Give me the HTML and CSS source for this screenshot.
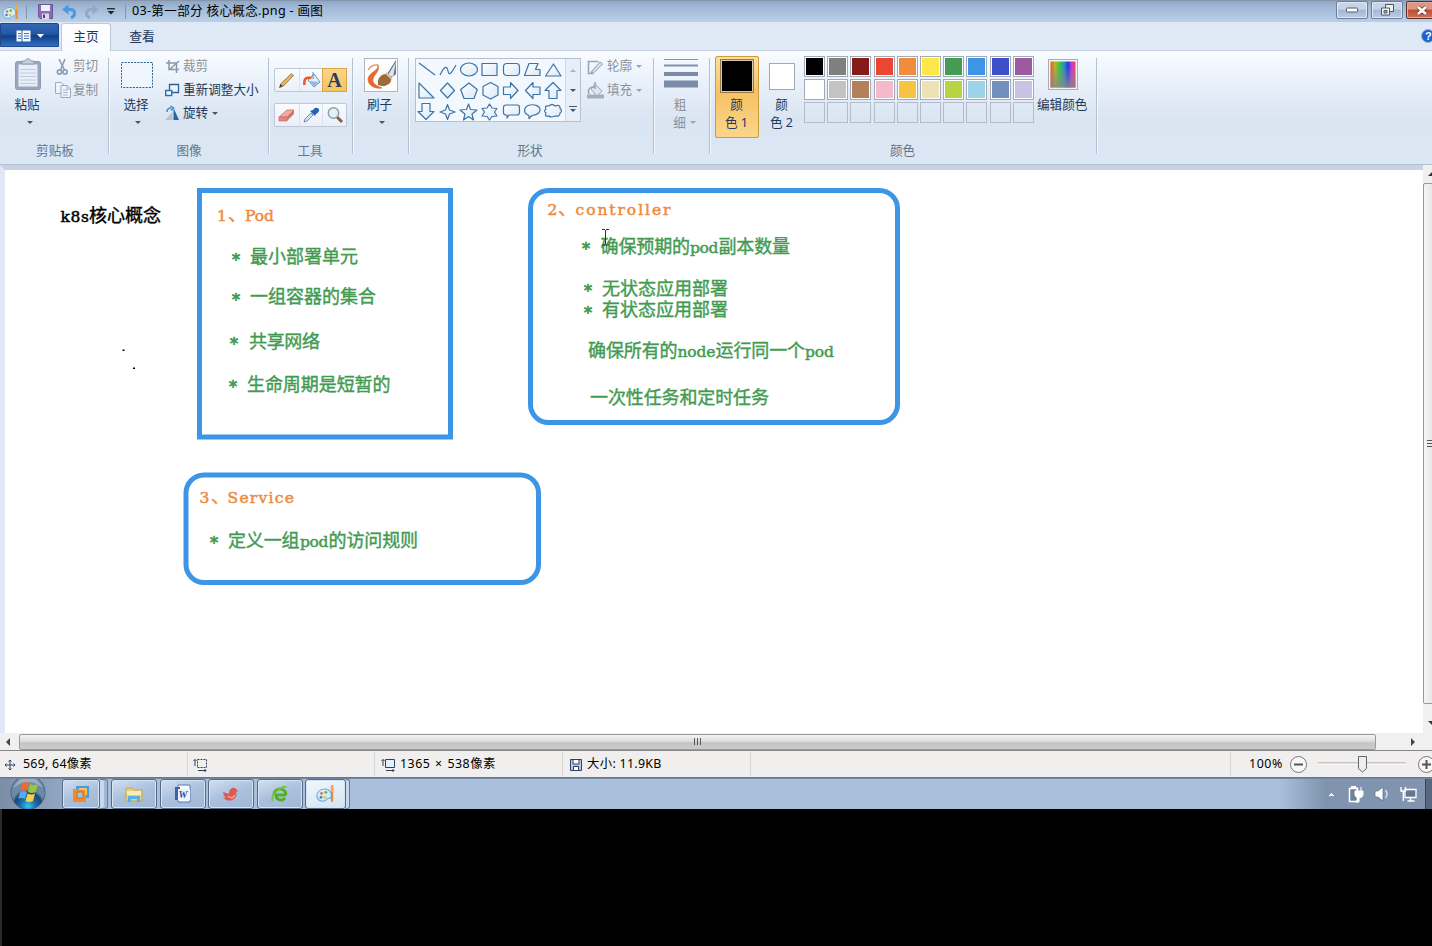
FILE: index.html
```html
<!DOCTYPE html>
<html lang="zh-CN">
<head>
<meta charset="utf-8">
<title>03-第一部分 核心概念.png - 画图</title>
<link rel="stylesheet" href="styles.css">
</head>
<body>
<svg class="defs" width="0" height="0">
  <defs>
    <linearGradient id="shade" x1="0" y1="0" x2="1" y2="1"><stop offset="0" stop-color="#fff"/><stop offset="1" stop-color="#d9e9f8"/></linearGradient>
    <linearGradient id="rainbow"><stop offset="0" stop-color="#e8552a"/><stop offset=".18" stop-color="#b5b52c"/><stop offset=".36" stop-color="#3bc63b"/><stop offset=".55" stop-color="#2a8ec8"/><stop offset=".7" stop-color="#2c36dd"/><stop offset=".85" stop-color="#c738e2"/><stop offset="1" stop-color="#f04458"/></linearGradient>
    <linearGradient id="fade" x2="0" y2="1"><stop offset=".2" stop-color="#888" stop-opacity="0"/><stop offset="1" stop-color="#888" stop-opacity=".85"/></linearGradient>
    <radialGradient id="orb" cy=".9"><stop offset="0" stop-color="#35c5f5"/><stop offset=".45" stop-color="#176fae"/><stop offset=".8" stop-color="#1d4672"/><stop offset="1" stop-color="#6d8ba8"/></radialGradient>
    <symbol id="paint" viewBox="0 0 18 18"><path d="M8 4.500C3 4.500 0 8 1 12c1 4 6 4 8 2.500 1-2 2-1 4-2 2-3 0-8-5-8z" fill="#d6eafa" stroke="#6aaad6"/><circle cx="5" cy="8.500" r="1.300" fill="#ef762d"/><circle cx="8.800" cy="7.500" r="1.300" fill="#57b854"/><circle cx="4.500" cy="12" r="1.300" fill="#2f87cf"/><circle cx="8" cy="12" r="1.300" fill="#e8c53a"/><path d="M14.500 1v6" stroke="#f2a64a" stroke-width="2.400"/><path d="M14.500 7v9" stroke="#e58b35" stroke-width="2"/></symbol>
  </defs>
</svg>
<div class="window">
  <header class="titlebar">
    <svg class="t-app" width="18" height="18"><use href="#paint"/></svg>
    <i class="t-sep"></i>
    <svg class="t-save" width="15" height="15" viewBox="0 0 15 15"><path d="M.5.5h14v14H2l-1.500-1.500z" fill="#8b6bb4" stroke="#6d5597"/><path d="M3 1h9v6H3z" fill="#e9f4fa"/><path d="M4 9.500h7V15H4z" fill="#dcd8ea"/><path d="M5 10.500h2V14H5z" fill="#54407c"/></svg>
    <svg class="t-undo" width="15" height="16" viewBox="0 0 15 16"><path d="M4 5.500h4c6 0 6 6 1 8.500" fill="none" stroke="#4a98de" stroke-width="3"/><path d="M0 5.500 6.500.500v10z" fill="#4a98de"/></svg>
    <svg class="t-redo" width="15" height="16" viewBox="0 0 15 16"><path d="M11 5.500H7c-6 0-6 6-1 8.500" fill="none" stroke="#94a9c3" stroke-width="3"/><path d="M15 5.500 8.500.500v10z" fill="#94a9c3"/></svg>
    <svg class="t-more" width="8" height="7" viewBox="0 0 8 7"><path d="M0 .700h8" stroke="#222" stroke-width="1.300"/><path d="M.500 3h7L4 6.500z" fill="#222"/></svg>
    <i class="t-sep t-sep2"></i>
    <h1 class="title">03-第一部分 核心概念.png - 画图</h1>
    <div class="winbtns">
      <span class="wb"><svg width="12" height="6" viewBox="0 0 12 6"><rect x=".5" y="1" width="11" height="4" rx="1" fill="#fff" stroke="#555c68"/></svg></span>
      <span class="wb"><svg width="13" height="12" viewBox="0 0 13 12"><path d="M4.500.500h8v7h-8z" fill="#eee" stroke="#4f5765"/><path d="M.500 4h8v7h-8z" fill="#f5f5f5" stroke="#4f5765"/><path d="M3 6.500h3v2.500H3z" fill="#9db2cc" stroke="#4f5765"/></svg></span>
      <span class="wb wb-close"><svg width="12" height="11" viewBox="0 0 12 11"><path d="m2 2 8 7m0-7L2 9" stroke="#653c3c" stroke-width="4.200"/><path d="m2 2 8 7m0-7L2 9" stroke="#fff" stroke-width="2.600"/></svg></span>
    </div>
  </header>

  <nav class="tabs">
    <span class="filebtn"><svg width="30" height="12" viewBox="0 0 30 12"><rect x=".5" y=".5" width="14" height="11" fill="#f6faff"/><path d="M6 0v12" stroke="#2a5cab"/><path d="M2 3.500h3m-3 2.500h3M2 8.500h3M8 3.500h5M8 6h5M8 8.500h5" stroke="#5072a8"/><path d="M21 4h7l-3.500 4z" fill="#fff"/></svg></span>
    <span class="tab tab-on">主页</span>
    <span class="tab">查看</span>
    <svg class="help" width="14" height="14" viewBox="0 0 14 14"><circle cx="7" cy="7" r="6.400" fill="#1f5fd0" stroke="#86a8da"/><text x="4" y="11" class="help-q">?</text></svg>
  </nav>

  <section class="ribbon">
    <div class="group g-clip">
      <div class="body">
        <div class="big">
          <svg class="big-ic" width="28" height="34" viewBox="0 0 28 34"><rect x="1.500" y="3.500" width="25" height="28" rx="2" fill="#98a6be" stroke="#8d9bb4"/><path d="M4.500 6.500h19v22h-19z" fill="#e8eef7"/><path d="M6 11.500h16M6 15h16M6 18.500h16M6 22h16M6 25.500h16" stroke="#c0cce0"/><path d="M8 6V3h3c1-3 5-3 6 0h3v3z" fill="#c6d0df" stroke="#8d9cb5"/></svg>
          <b>粘贴</b><i class="arr"></i>
        </div>
        <div class="list">
          <span class="off"><svg width="18" height="18" viewBox="0 0 18 18"><path d="M4 1l5.500 11M10 1 5.500 12" stroke="#8d9db5" stroke-width="1.600"/><g fill="none" stroke="#8d9db5" stroke-width="1.700"><circle cx="4.500" cy="14" r="2.100"/><circle cx="10" cy="14" r="2.100"/></g></svg>剪切</span>
          <span class="off"><svg width="18" height="18" viewBox="0 0 18 18"><path d="M.500 1.500h6l3 3v8h-9z" fill="#eef3fa" stroke="#a0adc0"/><path d="M6 4.500h6l3.500 3.500v8.500H6z" fill="#f0f4fa" stroke="#98a7bc"/><path d="M8 9h5m-5 2.500h5m-5 2.500h5M12 4.500V8h3.500" fill="none" stroke="#a9b6c9"/></svg>复制</span>
        </div>
      </div>
      <p class="name">剪贴板</p>
    </div>

    <div class="group g-image">
      <div class="body">
        <div class="big">
          <svg class="big-ic" width="34" height="34" viewBox="0 0 34 34"><rect x="1.500" y="4.500" width="31" height="25" fill="#f0f6fd" stroke="#2c6091" stroke-dasharray="2 1.200"/></svg>
          <b>选择</b><i class="arr"></i>
        </div>
        <div class="list">
          <span class="off"><svg width="18" height="18" viewBox="0 0 18 18"><path d="M1 5h10.500v10M4 2v9.500h10M4.500 11.500 14 3" fill="none" stroke="#8998ae" stroke-width="1.500"/></svg>裁剪</span>
          <span><svg width="18" height="18" viewBox="0 0 18 18"><path d="M4.500 3.500h9v8h-9z" fill="#eef6ff" stroke="#2d6093" stroke-width="1.300"/><path d="M.700 9.500h6v5h-6z" fill="#f4f9ff" stroke="#2a72b4" stroke-width="1.400"/></svg>重新调整大小</span>
          <span><svg width="18" height="18" viewBox="0 0 18 18"><path d="M7.500 7v8H0z" fill="#b8c3cf"/><path d="M8.500 3 14 15H8.500z" fill="#2068a9"/><path d="M2 7q0-4 4-4M5.500 1l3 2-2.500 2.500" fill="none" stroke="#408ed5" stroke-width="1.600"/></svg>旋转<i class="arr"></i></span>
        </div>
      </div>
      <p class="name">图像</p>
    </div>

    <div class="group g-tools">
      <div class="body tools">
        <div class="strip">
          <span><svg width="18" height="18" viewBox="0 0 18 18"><path d="m1.500 16.500 1.500-4L13 3l2 2L5.500 15z" fill="#e8b64e" stroke="#866b3e" stroke-width=".8"/><path d="m1.500 16.500 1-3.500 2 2z" fill="#333"/><path d="m12.500 3 1-1 2.700 2.500-1 1z" fill="#e28b87"/></svg></span>
          <span><svg width="20" height="18" viewBox="0 0 20 18"><path d="m6 9 6-6 6 8-6 5z" fill="#e2eef7" stroke="#688eb4"/><path d="m7 10 10 1-5 4z" fill="#8ebbdc"/><path d="M2.500 14c-1-7 2-8 7-7" fill="none" stroke="#e35a2f" stroke-width="2.500"/><path d="M11 1v7" stroke="#748899"/></svg></span>
          <span class="on"><em>A</em></span>
        </div>
        <div class="strip">
          <span><svg width="19" height="18" viewBox="0 0 19 18"><path d="m2 11 8-7h7l-7 7z" fill="#f3aaa0" stroke="#ca7269" stroke-width=".8"/><path d="M2 11h8v4H2z" fill="#e98379" stroke="#ca7269" stroke-width=".8"/><path d="m10 11 7-7v4l-7 7z" fill="#d2776d"/></svg></span>
          <span><svg width="18" height="18" viewBox="0 0 18 18"><path d="m2 16 1-3 6-6 2 2-6 6z" fill="#cbe5f7" stroke="#7291ab"/><path d="m8 5 5 5 1-2c4-2 4-6 1-6-2-1-3 1-4 2z" fill="#2264b2"/></svg></span>
          <span><svg width="18" height="18" viewBox="0 0 18 18"><path d="m11 11 5 5" stroke="#8b5e48" stroke-width="3"/><circle cx="7.500" cy="7" r="5.200" fill="#e1f1fb" stroke="#909eaa" stroke-width="1.500"/></svg></span>
        </div>
      </div>
      <p class="name">工具</p>
    </div>

    <div class="group g-brush">
      <div class="body">
        <div class="big">
          <svg class="big-ic" width="34" height="34" viewBox="0 0 34 34"><rect x=".5" y=".5" width="33" height="33" fill="#fdfdfd" stroke="#aeb6c1"/><path d="M14 7Q8 6 4 12" fill="none" stroke="#e78b62" stroke-width="1.300"/><path d="M14 7c1 6-9 7-10 14 0 6 6 10 14 9-6-2-10-5-9-9 1-5 7-7 5-14z" fill="#e3692e" stroke="#e3692e" stroke-width=".8"/><path d="m23 16 9-14v14l-6 5z" fill="#657689"/><path d="m24 17 8-13-3 15z" fill="#dce4eb"/><path d="M14 27c-1-7 3-11 8-11l5 5c1 5-7 9-13 6z" fill="#9c6b38"/><path d="m22 15 6 6" stroke="#d4c2a2" stroke-width="2"/></svg>
          <b>刷子</b><i class="arr"></i>
        </div>
      </div>
    </div>

    <div class="group g-shapes">
      <div class="body">
        <div class="shapebox">
          <svg class="shapes" width="149" height="63" viewBox="416 58 149 63">
            <g fill="url(#shade)" stroke="#3d74a8" stroke-width="1.200" stroke-linejoin="round">
              <path d="m419 62 16 12"/><path d="M440 74c5-10 7-9 8-4s3 3 8-6" fill="none"/><ellipse cx="469" cy="68.500" rx="8.500" ry="6.500"/><path d="M482 62.500h15v12h-15z"/><rect x="503.500" y="62.500" width="16" height="12" rx="3.500"/><path d="M524.500 74.500 529 62.500h9l-2.500 6h4.500v6z"/><path d="m553.500 63 7.500 12h-15.500z"/>
              <path d="m419 82 15 15h-15z"/><path d="m447.500 82 7 7.500-7 7.500-7-7.500z"/><path d="m469 82 8.300 6.500-3.300 9h-10l-3.300-9z"/><path d="m490.500 81.500 7.500 4v8.500l-7.500 4-7.500-4v-8.500z"/><path d="M503.500 86h7v-4.500l7.500 8-7.500 8V93.500h-7z"/><path d="M540 86h-7v-4.500l-7.500 8 7.500 8V93.500h7z"/><path d="M549 97.500v-8h-4l8-8 8 8h-4v8z"/>
              <path d="M422 102.500v8h-4l8 8 8-8h-4v-8z"/><path d="m447.500 103.500 2 5.500 5.500 2-5.500 2-2 5.500-2-5.500-5.500-2 5.500-2z"/><path d="m468.500 103 2 5.500 6.500.500-5 4 1.500 6-5-3.500-5 3.500 1.500-6-5-4 6.500-.500z"/><path d="m489.500 103 2.500 4 5 .5-2.500 3.500 2.500 4-5 .5-2.500 3.500-2.500-3.500-5-.5 2.500-4-2.500-3.500 5-.5z"/><path d="M506 104h11q2.500 0 2.500 2.500v5q0 2.500-2.500 2.500h-8l-2 3v-3h-1q-2.500 0-2.500-2.500v-5q0-2.500 2.500-2.500z"/><path d="M529 114.500c-6-2-6-9 1-10.500 11-2 15 9 2 10.500l-3 3z"/><path d="M549 105q3-3 6 0 5-2 5 2 3 3 0 5 0 4-5 3-4 2-6 0-5 1-3-3-3-2 0-4-2-4 3-3z"/>
            </g>
          </svg>
          <div class="shapescroll"><i class="arr up"></i><i class="arr"></i><i class="arr bar"></i></div>
        </div>
        <div class="list">
          <span class="off"><svg width="18" height="18" viewBox="0 0 18 18"><path d="M.500 3.500h11M1.500 3v12.500h5" fill="none" stroke="#9aa7b9" stroke-width="1.600"/><path d="m5 13 8-9 2.500 2L7 14.500l-3 1z" fill="#dce5ef" stroke="#8797ae"/></svg>轮廓<i class="arr"></i></span>
          <span class="off"><svg width="18" height="18" viewBox="0 0 18 18"><path d="M0 13.500h17v4H0z" fill="#a3aebf"/><path d="m4 8 4-5 7 7-5 5z" fill="#dce5ef" stroke="#98a7bc"/><path d="M2 13c-2-6 2-7 6-7M8 1v7" fill="none" stroke="#98a7bc" stroke-width="1.500"/></svg>填充<i class="arr"></i></span>
        </div>
      </div>
      <p class="name">形状</p>
    </div>

    <div class="group g-size">
      <div class="body">
        <div class="big off">
          <svg class="big-ic" width="34" height="34" viewBox="0 0 34 34"><path d="M0 1.500h34" stroke="#8391ab"/><path d="M0 7.500h34" stroke="#8391ab" stroke-width="2"/><path d="M0 16h34" stroke="#7b8ba9" stroke-width="4"/><path d="M0 26h34" stroke="#7b8ba9" stroke-width="7"/></svg>
          <b>粗</b><b>细<i class="arr"></i></b>
        </div>
      </div>
    </div>

    <div class="group g-colors">
      <div class="body">
        <div class="colorbtn sel"><i class="well c-black"></i><b>颜</b><b>色 1</b></div>
        <div class="colorbtn"><i class="well small"></i><b>颜</b><b>色 2</b></div>
        <div class="palette">
          <i class="c-black"></i><i class="c-gray"></i><i class="c-maroon"></i><i class="c-red"></i><i class="c-orange"></i><i class="c-yellow"></i><i class="c-green"></i><i class="c-blue"></i><i class="c-indigo"></i><i class="c-purple"></i>
          <i class="c-white"></i><i class="c-silver"></i><i class="c-brown"></i><i class="c-pink"></i><i class="c-gold"></i><i class="c-cream"></i><i class="c-lime"></i><i class="c-sky"></i><i class="c-steel"></i><i class="c-lilac"></i>
          <i class="none"></i><i class="none"></i><i class="none"></i><i class="none"></i><i class="none"></i><i class="none"></i><i class="none"></i><i class="none"></i><i class="none"></i><i class="none"></i>
        </div>
        <div class="big edit">
          <svg class="big-ic" width="32" height="34" viewBox="0 0 32 34"><rect x="1.500" y="1.500" width="29" height="30" fill="#f7f3ee" stroke="#a9adb5"/><path d="M3.500 3.500h25v26h-25z" fill="url(#rainbow)"/><path d="M3.500 3.500h25v26h-25z" fill="url(#fade)"/></svg>
          <b>编辑颜色</b>
        </div>
      </div>
      <p class="name">颜色</p>
    </div>
  </section>

  <main class="work">
    <svg class="sheet" width="1418" height="563" viewBox="5 170 1418 563">
      <g class="frame">
        <rect x="199.500" y="190.500" width="251" height="246.500"/>
        <rect x="530.500" y="190.500" width="367" height="232" rx="18"/>
        <rect x="186" y="475" width="352.500" height="107.500" rx="18"/>
      </g>
      <text class="ink" y="221.500"><tspan class="lat" x="60.500" textLength="28.500">k8s</tspan><tspan x="89" textLength="72">核心概念</tspan></text>
      <g class="orange">
        <text y="221"><tspan class="lat" x="217">1</tspan><tspan x="228">、</tspan><tspan class="lat" x="245" textLength="29">Pod</tspan></text>
        <text y="215"><tspan class="lat" x="547.500">2</tspan><tspan x="558">、</tspan><tspan class="lat" x="575.500" textLength="95">controller</tspan></text>
        <text y="503"><tspan class="lat" x="199.500">3</tspan><tspan x="211">、</tspan><tspan class="lat" x="227.500" textLength="66.500">Service</tspan></text>
      </g>
      <g class="green">
        <text y="263"><tspan class="star" x="232" dy="2.500">*</tspan><tspan x="250" dy="-2.500" textLength="108">最小部署单元</tspan></text>
        <text y="303"><tspan class="star" x="232" dy="2.500">*</tspan><tspan x="250" dy="-2.500" textLength="126">一组容器的集合</tspan></text>
        <text y="347.500"><tspan class="star" x="230" dy="2.500">*</tspan><tspan x="249" dy="-2.500" textLength="71">共享网络</tspan></text>
        <text y="390.500"><tspan class="star" x="229" dy="2.500">*</tspan><tspan x="247" dy="-2.500" textLength="143.500">生命周期是短暂的</tspan></text>
        <text y="252.500"><tspan class="star" x="582" dy="2.500">*</tspan><tspan x="600.500" dy="-2.500" textLength="89.500">确保预期的</tspan><tspan class="lat" x="690" textLength="28.500">pod</tspan><tspan x="718.500" textLength="71.500">副本数量</tspan></text>
        <text y="294.500"><tspan class="star" x="584" dy="2.500">*</tspan><tspan x="602" dy="-2.500" textLength="126">无状态应用部署</tspan></text>
        <text y="316"><tspan class="star" x="584" dy="2.500">*</tspan><tspan x="602" dy="-2.500" textLength="126">有状态应用部署</tspan></text>
        <text y="357"><tspan x="588" textLength="89.500">确保所有的</tspan><tspan class="lat" x="677.500" textLength="38">node</tspan><tspan x="715.500" textLength="89.500">运行同一个</tspan><tspan class="lat" x="805" textLength="29">pod</tspan></text>
        <text y="403.500"><tspan x="590" textLength="179">一次性任务和定时任务</tspan></text>
        <text y="546.500"><tspan class="star" x="210" dy="2.500">*</tspan><tspan x="228" dy="-2.500" textLength="71.500">定义一组</tspan><tspan class="lat" x="300" textLength="28.500">pod</tspan><tspan x="328.500" textLength="89.500">的访问规则</tspan></text>
      </g>
      <path d="M122.500 349.500h2v1.500h-2zM133 367.500h2v1.500h-2z"/>
      <path d="M602 229.500h3m1 0h3M605.500 230v14.500M602 245h3m1 0h3" fill="none" stroke="#333"/>
    </svg>
    <div class="vscroll"><i class="arr up"></i><div class="vthumb"><i></i><i></i><i></i></div><i class="arr"></i></div>
  </main>

  <div class="hscroll"><i class="arr left"></i><div class="hthumb"><i></i><i></i><i></i></div><i class="arr right"></i></div>

  <footer class="status">
    <div class="cell s1"><svg width="12" height="12" viewBox="0 0 12 12"><path d="M6 1v10M1 6h10M4.500 2.500 6 1l1.500 1.500m-3 7L6 11l1.500-1.500m-5-5L1 6l1.500 1.500m7-3L11 6 9.500 7.500" fill="none" stroke="#2c4262"/></svg>569, 64像素</div>
    <div class="cell s2"><svg width="14" height="14" viewBox="0 0 14 14"><path d="M2 8V1.500M.500 3 2 1.500 3.500 3M5 12.500h8M11.500 11l1.500 1.500-1.500 1.500" fill="none" stroke="#2c4262"/><path d="M4.500 1.500h9v8h-9z" fill="none" stroke="#2c4262" stroke-dasharray="2 1"/></svg></div>
    <div class="cell s3"><svg width="14" height="14" viewBox="0 0 14 14"><path d="M2 8V1.500M.500 3 2 1.500 3.500 3M5 12.500h8M11.500 11l1.500 1.500-1.500 1.500" fill="none" stroke="#2c4262"/><path d="M4.500 1.500h9v8h-9z" fill="#e4f0fa" stroke="#2c4262"/></svg>1365 × 538像素</div>
    <div class="cell s4"><svg width="12" height="12" viewBox="0 0 12 12"><path d="M.500.500h11v11H.500z" fill="#b8cce0" stroke="#2c4262"/><path d="M3 .500h6v4.500H3zM3.500 7.500h5v4h-5z" fill="#fff" stroke="#2c4262"/></svg>大小: 11.9KB</div>
    <div class="cell s5"></div>
    <div class="zoom">
      <span>100%</span>
      <svg width="19" height="19" viewBox="0 0 19 19"><circle cx="9.500" cy="9.500" r="8" fill="#f7f7f7" stroke="#777"/><path d="M5 9.500h9" stroke="#555" stroke-width="2"/></svg>
      <svg class="slider" width="90" height="18" viewBox="0 0 90 18"><path d="M1 8h88" stroke="#999"/><path d="M1 9h88" stroke="#fff"/><path d="M41.500 1.500h8v12l-4 3.500-4-3.500z" fill="#eee" stroke="#666"/></svg>
      <svg width="19" height="19" viewBox="0 0 19 19"><circle cx="9.500" cy="9.500" r="8" fill="#f7f7f7" stroke="#777"/><path d="M5 9.500h9M9.500 5v9" stroke="#555" stroke-width="2"/></svg>
    </div>
  </footer>

  <div class="taskbar">
    <svg class="orb" width="38" height="30" viewBox="0 0 38 30"><circle cx="19" cy="13.500" r="17" fill="url(#orb)" stroke="#466685"/><path d="M4 9q15-12 30 0Q28-2 19-2T4 9z" fill="#fff" opacity=".3"/><path d="M13.500 4q4-2 6.500 0l-2 8q-3-2-6.500 0z" fill="#ed6b2c"/><path d="M21 5q4 2 8 0l-2.500 8q-4 2-7.500 0z" fill="#9bc43d"/><path d="M11.500 13q3-2 6.500 0l-2 7q-4-2-7 0z" fill="#55aaf0"/><path d="M18.500 14.500q4 2 7.500 0l-2 7.500q-4 2-7.500 0z" fill="#f8cf45"/></svg>
    <span class="task t1"><svg width="20" height="20" viewBox="0 0 20 20"><path d="M5 2h13v12H5z" fill="#4c9bd5"/><path d="M2 5h13v13H2z" fill="#ef8b2c"/><path d="M6 8h6v6H6z" fill="#9cc4e7" stroke="#cc6c20"/><path d="M8 5h7v6" fill="none" stroke="#f7be67" stroke-width="2"/></svg></span>
    <i class="stack"></i>
    <span class="task"><svg width="20" height="20" viewBox="0 0 20 20"><path d="M2 4h6l2 2h8v11H2z" fill="#e8cf7b" stroke="#c4a85c"/><path d="M3 7h14v4H3z" fill="#f9eeb4"/><path d="M4 18v-6h12v6h-3v-3H7v3z" fill="#58afe0"/></svg></span>
    <span class="task"><svg width="20" height="20" viewBox="0 0 20 20"><path d="M5 1h12v17H5z" fill="#f7faff" stroke="#597aa9"/><path d="M2 3h5v13H2z" fill="#3d61a5"/><path d="M5 5h12v11H5z" fill="#eef4fd"/><text class="word-w" x="5.500" y="14">W</text></svg></span>
    <span class="task"><svg width="20" height="20" viewBox="0 0 20 20"><path d="M2 8q3 1 6 2c0-5 3-7 6-6l3 3-2 1c3 8-9 12-13 5l3 1q-3-3-3-6z" fill="#dc5b50"/><path d="M7 12q4 4 7-1" fill="none" stroke="#f6a18f" stroke-width="1.500"/></svg></span>
    <span class="task"><svg width="20" height="20" viewBox="0 0 20 20"><path d="M16 11H6c0 6 7 6 9 3M4 11C4 3 16 3 16 11" fill="none" stroke="#53ae25" stroke-width="3"/><path d="M3 17C-1 14 10 1 17 3" fill="none" stroke="#74c443" stroke-width="1.800"/></svg></span>
    <span class="task active"><svg width="20" height="20"><use href="#paint"/></svg></span>
    <i class="stack one"></i>
    <div class="tray">
      <svg width="9" height="5" viewBox="0 0 9 5"><path d="m.500 4.500 4-4 4 4z" fill="#eef4fb" stroke="#5f718c" stroke-width=".5"/></svg>
      <svg width="16" height="18" viewBox="0 0 16 18"><path d="M1.500 3.500h8v13h-8z" fill="#718298" stroke="#fff" stroke-width="1.500"/><path d="M3 2h5" stroke="#fff" stroke-width="2"/><path d="M7 6h8v4q-1 3-4 3t-4-3zM9 2v4m4-4v4m-2 6v5H7" fill="#fff" stroke="#fff"/></svg>
      <svg width="16" height="16" viewBox="0 0 16 16"><path d="M1 5h3l5-4v14l-5-4H1z" fill="#fff" stroke="#596b83" stroke-width=".7"/><path d="M11.500 4q3 4 0 8" fill="none" stroke="#dce5f0" stroke-width="1.300"/></svg>
      <svg width="17" height="16" viewBox="0 0 17 16"><path d="M5 3.500h11v8H5z" fill="#64778f" stroke="#fff" stroke-width="1.300"/><path d="M10.500 12v3m-3 0h7M1 1v4h4.500V1M3.300 5v10" fill="none" stroke="#fff" stroke-width="1.400"/></svg>
      <i class="peek"></i>
    </div>
  </div>
</div>
</body>
</html>
```
FILE: styles.css
```css
* { box-sizing: border-box; }
body { margin: 0; background: linear-gradient(90deg, #2a2a2a 2px, #000 2px); width: 1432px; height: 946px; overflow: hidden; line-height: 1; font-family: "Noto Sans", "Noto Sans CJK SC", sans-serif; font-size: 12.6px; color: #1e395b; }
b, em, i, h1, p { font-weight: normal; font-style: normal; margin: 0; }
svg { display: block; flex: none; }
.defs { position: absolute; }
.window { width: 1432px; height: 809px; display: flex; flex-direction: column; overflow: hidden; }
.window > * { flex: none; }

.titlebar { height: 22px; display: flex; align-items: center; background: linear-gradient(#8fa8c6, #a3bbd8 35%, #b9cfe9); border-top: 1px solid #8796ab; padding-left: 2px; }
.t-sep { width: 1px; height: 14px; background: #7f93ad; margin-left: 6px; }
.t-save { margin-left: 11px; }
.t-undo { margin-left: 9px; }
.t-redo { margin-left: 7px; }
.t-more { margin-left: 8px; }
.t-sep2 { margin-left: 10px; }
.title { font-size: 12.6px; color: #000; margin-left: 6px; letter-spacing: .3px; white-space: pre; line-height: 19px; height: 21px; }
.winbtns { margin-left: auto; width: 96px; display: flex; gap: 3px; align-self: flex-start; }
.wb { width: 32px; height: 18px; flex: none; display: flex; align-items: center; justify-content: center; border: 1px solid #6d7f98; border-radius: 2px; background: linear-gradient(#c5d5e8 45%, #a3b8d2 50%, #b9cde5); box-shadow: inset 0 0 0 1px #dce8f5; }
.wb-close { background: linear-gradient(#dc9681 45%, #bf4b31 50%, #ce7356); border-color: #5c2d2d; box-shadow: inset 0 0 0 1px #e5aa99; }

.tabs { height: 29px; display: flex; background: #dfe8f5; border-bottom: 1px solid #c8d2e0; align-items: flex-start; padding-top: 1px; }
.filebtn { width: 59px; height: 24px; padding: 6px 0 0 15px; background: linear-gradient(#3568b3, #2356a4 45%, #123f8a 55%, #2f6fc2); border: 1px solid #1f4789; border-radius: 0 2px 0 0; }
.tab { height: 28px; line-height: 26px; width: 62px; text-align: center; font-size: 12.8px; }
.tab-on { width: 50px; margin-left: 2px; background: linear-gradient(#fff, #f8fbff); border: 1px solid #bdc9da; border-bottom: 0; border-radius: 3px 3px 0 0; line-height: 24px; }
.help { margin: 6px -3px 0 auto; }
.help-q { font: bold 11px "Liberation Sans", sans-serif; fill: #fff; }

.ribbon { height: 114px; display: flex; background: linear-gradient(#f8fcff, #e7eff9 32%, #dae5f2 60%, #dce7f5); border-bottom: 1px solid #b3c0d2; }
.group { position: relative; height: 110px; display: flex; flex-direction: column; padding-top: 6px; }
.group::after { content: ""; position: absolute; right: 0; top: 7px; width: 2px; height: 96px; background: linear-gradient(90deg, #b5c1d2 50%, #f4f8fd 50%); }
.body { height: 85px; flex: none; display: flex; align-items: flex-start; }
.name { text-align: center; color: #66758c; line-height: 18px; height: 18px; }
.big { display: flex; flex-direction: column; align-items: center; width: 34px; padding-top: 1px; }
.big b, .colorbtn b { height: 18px; line-height: 18px; white-space: pre; }
.big-ic { margin-bottom: 4px; }
.big > .arr { margin-top: 7px; }
.arr { display: inline-block; width: 0; height: 0; border: 3px solid transparent; border-top-color: #46566e; border-bottom: 0; flex: none; }
.arr.up { border-top: 0; border-bottom: 3px solid #a8b2c2; }
.off { color: #8c929b; }
.off .arr { border-top-color: #9aa3b0; }
.list { display: flex; flex-direction: column; margin-top: -2px; }
.list span { height: 23.500px; display: flex; align-items: center; white-space: nowrap; }
.list .arr { margin-left: 4px; }
.g-clip { width: 110px; padding-left: 13px; }
.g-clip .big { width: 30px; }
.g-clip .list { padding-left: 12px; }
.g-clip .name { margin-left: -13px; }
.g-clip .big b { margin-left: -2px; }
.g-clip .big .arr { margin-left: 3px; }
.g-image { width: 160px; padding-left: 10px; }
.g-image .big b { margin-left: -2px; }
.g-image .big .arr { margin-left: 2px; }
.g-image .list { padding-left: 11px; }
.g-image .name { margin-left: -12px; }
.g-tools { width: 84px; padding-left: 4px; }
.tools { flex-direction: column; gap: 11px; padding-top: 11px; }
.strip { display: flex; width: 73px; height: 24px; border: 1px solid #bec8d7; border-radius: 2px; background: linear-gradient(#f9fbfe, #eaf0f8); }
.strip span { width: 24px; height: 22px; display: flex; align-items: center; justify-content: center; border-left: 1px solid #dbe2ec; }
.strip span:first-child { border-left: 0; }
.strip .on { background: linear-gradient(#fbd58c, #f8c259); border: 1px solid #d8a44e; margin: -1px; width: 25px; height: 24px; }
.strip em { font: bold 20px "Liberation Serif", serif; color: #263f60; }
.g-tools .name { margin-left: -8px; }
.g-brush { width: 56px; padding-left: 10px; }
.g-brush .big b { margin-left: -3px; }
.g-brush .big .arr { margin-left: 2px; }
.g-shapes { width: 245px; padding-left: 5px; }
.shapebox { display: flex; width: 166px; height: 64px; border: 1px solid #b5c1d3; background: #f3f8fe; margin-top: 1px; }
.shapescroll { width: 15px; background: #e7eef8; border-left: 1px solid #cfd9e7; display: flex; flex-direction: column; align-items: center; gap: 17px; padding-top: 10px; }
.arr.bar { position: relative; }
.arr.bar::before { content: ""; position: absolute; left: -4px; top: -6px; width: 8px; height: 1px; background: #46566e; }
.g-shapes .list { padding-left: 6px; }
.g-shapes .list svg { margin-right: 2px; }
.g-shapes .name { margin-left: -10px; }
.g-size { width: 56px; padding-left: 9px; }
.g-size .big b { margin-left: -2px; }
.g-size .big b .arr { margin: 0 -9px 2px 4px; vertical-align: middle; }
.g-colors { width: 387px; padding-left: 4px; }
.colorbtn { width: 44px; height: 82px; display: flex; flex-direction: column; align-items: center; border: 1px solid transparent; margin-top: -1px; padding-top: 2px; }
.colorbtn + .colorbtn { margin-left: 1px; }
.colorbtn.sel { border-color: #cf9a3c; border-radius: 2px; background: linear-gradient(#fbdda3, #f6c264 45%, #fad58a); }
.well { width: 34px; height: 34px; flex: none; margin-bottom: 3px; border: 1px solid #9b7a49; box-shadow: inset 0 0 0 1px #d8c9a9; }
.well.small { width: 26px; height: 27px; margin: 4px 0 6px; background: #fff; border-color: #a2a9b3; box-shadow: none; }
.colorbtn b { margin-left: -1px; }
.palette { display: grid; grid-template-columns: repeat(10, 21px); grid-auto-rows: 21px; column-gap: 2.200px; row-gap: 2.200px; margin-top: -1px; }
.palette i { border: 1px solid #a4abb7; box-shadow: inset 0 0 0 1px #fff; }
.palette .none { background: none; border-color: #b2bccb; box-shadow: none; }
.c-black { background: #000; } .c-gray { background: #7f7f7f; } .c-maroon { background: #861b1b; } .c-red { background: #ea4632; } .c-orange { background: #f08c3e; }
.c-yellow { background: #fde648; } .c-green { background: #459b53; } .c-blue { background: #3d95e6; } .c-indigo { background: #3d50c8; } .c-purple { background: #9c5aa1; }
.c-white { background: #fff; } .c-silver { background: #c3c3c3; } .c-brown { background: #b47f5b; } .c-pink { background: #f5b9c9; } .c-gold { background: #f6c442; }
.c-cream { background: #eee1b5; } .c-lime { background: #b9d443; } .c-sky { background: #9dd3e9; } .c-steel { background: #7190bc; } .c-lilac { background: #c9c2e5; }
.big.edit { width: 54px; margin-left: 2px; }
.edit b { margin-left: -1px; }
.g-colors .name { margin-left: -8px; }

.work { height: 568px; display: flex; background: #fff; border-top: 5px solid #c8d2e2; border-left: 5px solid #dfe8f4; }
.sheet text { font-family: "DejaVu Serif", "Noto Sans CJK SC", sans-serif; font-size: 18px; stroke-width: .4px; }
.sheet .lat { font-size: 15.500px; stroke-width: .5px; }
.sheet .star { font-size: 16px; stroke-width: .7px; }
.frame { fill: none; stroke: #3d95e6; stroke-width: 5; }
.ink { fill: #000; stroke: #000; }
.orange { fill: #ed8b3f; stroke: #ed8b3f; }
.green { fill: #439b52; stroke: #439b52; }
.vscroll { width: 17px; flex: none; background: #f0f0f0; display: flex; flex-direction: column; align-items: center; padding: 4px 0 8px; margin-top: -5px; }
.vscroll .arr, .hscroll .arr { border-width: 4px; border-top-color: #333; border-bottom-width: 0; }
.vscroll .arr.up { border-top-width: 0; border-bottom: 4px solid #333; }
.vscroll .arr { margin: 3px 0 0 0; }
.vthumb { flex: 1; width: 17px; margin: 7px 0 14px; border: 1px solid #999; border-radius: 2px; background: linear-gradient(90deg, #f5f5f5, #ddd); display: flex; flex-direction: column; gap: 2px; justify-content: center; padding-left: 3px; }
.vthumb i { width: 8px; height: 1px; background: #555; }
.hscroll { height: 17px; display: flex; align-items: center; background: #f0f0f0; padding-left: 6px; }
.hscroll .arr.left { border: 4px solid transparent; border-right-color: #444; border-left: 0; }
.hscroll .arr.right { border: 4px solid transparent; border-left-color: #444; border-right: 0; margin-left: 35px; }
.hthumb { margin-left: 9px; width: 1357px; height: 16px; border: 1px solid #999; border-radius: 2px; background: linear-gradient(#f3f3f3, #dedede 45%, #c5c5c5 55%, #ccc); display: flex; gap: 2px; align-items: center; justify-content: center; }
.hthumb i { width: 1px; height: 7px; background: #555; }

.status { height: 28px; border-top: 1px solid #85888d; border-bottom: 1px solid #68788c; background: #f1eeee; display: flex; align-items: center; font-size: 12.4px; color: #000; }
.cell { height: 24px; flex: none; display: flex; align-items: center; border-right: 1px solid #d5d5d5; white-space: pre; padding-top: 1px; }
.s1 { width: 188px; padding-left: 4px; gap: 7px; letter-spacing: .25px; }
.s2 { width: 187px; padding-left: 5px; }
.s3 { width: 188px; padding-left: 6px; gap: 5px; letter-spacing: .5px; word-spacing: 1px; }
.s4 { width: 188px; padding-left: 7px; gap: 5px; letter-spacing: .3px; }
.s5 { width: 480px; }
.zoom { display: flex; align-items: center; flex: none; padding-left: 18px; letter-spacing: .6px; }
.zoom span { width: 40px; }
.slider { margin: 0 10px 0 9px; }

.taskbar { height: 31px; display: flex; align-items: stretch; border-top: 1px solid #7186a0; background: linear-gradient(90deg, #7c8da5, #8ea3bf 55px, #a9bfdb 110px, #a9bfdb 1280px, #8094af 1325px, #8094af); padding-left: 9px; }
.orb { margin-right: 15px; }
.task { width: 46px; margin-right: 2.500px; display: flex; align-items: center; justify-content: center; border: 1px solid #526b88; border-radius: 3px; background: linear-gradient(160deg, #d2e0f1, #abc0dc 50%, #a0b8d5); box-shadow: inset 0 0 0 1px #d6e3f3; }
.t1 { width: 38px; margin-right: 0; }
.stack { width: 8px; margin-right: 3px; border: 1px solid #607b9b; border-left: 0; border-radius: 0 3px 3px 0; background: #c8d8eb; box-shadow: inset -3px 0 #9fb9d7; }
.stack.one { width: 4px; box-shadow: none; }
.active { width: 41px; margin-right: 0; background: linear-gradient(160deg, #f2f7fd, #d5e2f1); }
.word-w { font: italic bold 10px "Liberation Serif", serif; fill: #254f98; }
.tray { margin-left: auto; display: flex; align-items: center; gap: 10px; }
.tray svg:first-child { margin-right: 2px; }
.peek { width: 7px; height: 30px; margin-left: -2px; background: #56677f; border-left: 1px solid #34465e; }
```
